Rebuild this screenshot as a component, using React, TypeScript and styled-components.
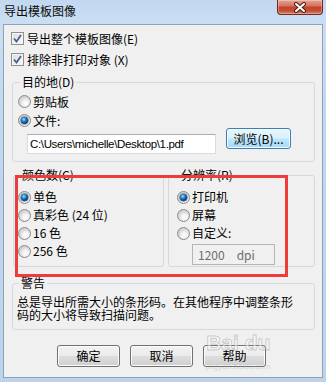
import React from "react";
import styled, { createGlobalStyle, css } from "styled-components";

const FONT = `"Noto Sans CJK SC", "Noto Sans", sans-serif`;

const Global = createGlobalStyle`
  html, body { margin: 0; padding: 0; background: #c6dbf2; }
  * { box-sizing: border-box; }
`;

const Window = styled.div`
  position: relative;
  width: 326px;
  height: 382px;
  display: flex;
  flex-direction: column;
  background: linear-gradient(#c2d8f1, #cadef3 22px, #c1d7ef 120px, #bdd3ec);
  font-family: ${FONT};
  font-size: 12px;
  color: #000;
  overflow: hidden;
`;

const TitleBar = styled.div`
  height: 24px;
  flex: none;
  display: flex;
  align-items: flex-start;
  justify-content: space-between;
  padding: 0 3px 0 4px;
`;

const Title = styled.div`
  line-height: 14px;
  padding-top: 4px;
  color: #0a0a0a;
`;

const CloseButton = styled.div`
  width: 46px;
  height: 15px;
  border: 1px solid #6d2b21;
  border-top: none;
  border-radius: 0 0 4px 4px;
  background: linear-gradient(#e6a395, #d67562 40%, #c4452e 52%, #c54b34 75%, #d8806a);
  box-shadow: inset 0 0 0 1px rgba(255, 255, 255, 0.3);
  display: flex;
  align-items: center;
  justify-content: center;
`;

const Client = styled.div`
  flex: 1;
  margin: 0 3px 4px 3px;
  background: #f0f0f0;
  border: 1px solid #8fa1b6;
  display: flex;
  flex-direction: column;
  padding: 3px 7px 10px 8px;
`;

const CheckRow = styled.label`
  height: 21px;
  display: flex;
  align-items: center;
  gap: 3px;
  margin-left: -1px;
  line-height: 14px;
`;

const CheckBox = styled.span`
  width: 13px;
  height: 13px;
  flex: none;
  border: 1px solid #8e8f8f;
  background: linear-gradient(135deg, #dcdcdc, #fbfbfb);
  box-shadow: inset 0 0 0 1px #f4f4f4;
  display: flex;
  align-items: center;
  justify-content: center;
`;

const Group = styled.fieldset<{ $pt: number; $pb: number; $pl: number; $pr?: number }>`
  margin: 0;
  min-width: 0;
  border: 1px solid #d3dadf;
  border-radius: 3px;
  padding: ${(p) => `${p.$pt}px ${p.$pr ?? 5}px ${p.$pb}px ${p.$pl}px`};
`;

const Legend = styled.legend`
  padding: 0 2px;
  margin-left: 2px;
  line-height: 14px;
  height: 14px;
`;

const RadioRow = styled.label<{ $h: number }>`
  height: ${(p) => p.$h}px;
  display: flex;
  align-items: center;
  gap: 2px;
  line-height: 14px;
  white-space: nowrap;
`;

const Radio = styled.span<{ $on?: boolean }>`
  position: relative;
  width: 13px;
  height: 13px;
  flex: none;
  border-radius: 50%;
  border: 1px solid #8b8b8b;
  background: radial-gradient(circle at 60% 65%, #ffffff 0, #f2f2f2 3px, #d3d3d3 6px);
  ${(p) =>
    p.$on &&
    css`
      &::after {
        content: "";
        position: absolute;
        left: 2px;
        top: 2px;
        width: 7px;
        height: 7px;
        border-radius: 50%;
        background: radial-gradient(circle at 40% 35%, #b8e6ff 0, #3b9ad8 1.5px, #0f5fa8 3px, #0a3f78 4px);
        box-shadow: 0 0 0 0.5px #1c4f80;
      }
    `}
`;

const FileRow = styled.div`
  display: flex;
  align-items: flex-start;
  margin-top: -2px;
`;

const PathInput = styled.div`
  width: 189px;
  height: 20px;
  margin: 6px 0 0 9px;
  background: #fff;
  border: 1px solid #d7dbe2;
  border-top-color: #abadb3;
  padding: 0 2px;
  font-family: "Liberation Sans", ${FONT};
  font-size: 11.5px;
  letter-spacing: -0.35px;
  line-height: 18px;
  white-space: nowrap;
  overflow: hidden;
`;

const Button = styled.div<{ $hot?: boolean }>`
  width: ${(p) => (p.$hot ? 65 : 63)}px;
  height: ${(p) => (p.$hot ? 21 : 22)}px;
  border: 1px solid #707070;
  border-radius: 3px;
  background: linear-gradient(#f2f2f2, #ebebeb 48%, #dddddd 52%, #cfcfcf);
  box-shadow: inset 0 0 0 1px #fcfcfc;
  display: flex;
  align-items: center;
  justify-content: center;
  line-height: 14px;
  ${(p) =>
    p.$hot &&
    css`
      margin-left: 10px;
      border-color: #3c7fb1;
      background: linear-gradient(#eaf6fd, #d9f0fc 48%, #bee6fd 52%, #a7d9f5);
      box-shadow: inset 0 0 0 1px #f4fbfe;
    `}
`;

const GroupRow = styled.div`
  display: flex;
  gap: 4px;
  margin: 6px 0 0 1px;
`;

const DpiInput = styled.div`
  width: 83px;
  height: 21px;
  margin: 2px 0 0 15px;
  border: 1px solid #b5b5b5;
  background: #f0f0f0;
  color: #6d6d6d;
  display: flex;
  align-items: center;
  gap: 12px;
  padding-left: 5px;
  line-height: 14px;
`;

const WarnText = styled.div`
  line-height: 13px;
`;

const ButtonRow = styled.div`
  display: flex;
  justify-content: center;
  gap: 10px;
  margin-top: 15px;
  padding-right: 4px;
`;

const Annotation = styled.div`
  position: absolute;
  left: 15px;
  top: 175px;
  width: 273px;
  height: 102px;
  border: 3px solid #f03b3b;
  pointer-events: none;
`;

const Watermark = styled.div`
  position: absolute;
  left: 206px;
  top: 332px;
  color: rgba(150, 150, 150, 0.35);
  font-family: "Liberation Sans", sans-serif;
  pointer-events: none;
  display: flex;
  flex-direction: column;
  align-items: center;
`;

const MarkBig = styled.span`
  font-size: 21px;
  font-weight: bold;
  line-height: 22px;
  color: rgba(255, 255, 255, 0.5);
  -webkit-text-stroke: 1px rgba(150, 150, 150, 0.45);
`;

const MarkSmall = styled.span`
  font-size: 8px;
  line-height: 9px;
  margin-top: 8px;
`;

const Check = () => (
  <svg width="9" height="9" viewBox="0 0 9 9">
    <path d="M1 4.5 L3.5 7.5 L8 1" fill="none" stroke="#4a5f8e" strokeWidth="1.8" />
  </svg>
);

const CloseX = () => (
  <svg width="14" height="11" viewBox="0 0 14 11">
    <path d="M3 2 L11 9 M11 2 L3 9" stroke="#4a1c14" strokeWidth="4" strokeLinecap="round" />
    <path d="M3 2 L11 9 M11 2 L3 9" stroke="#ffffff" strokeWidth="2" strokeLinecap="round" />
  </svg>
);

export default function App() {
  return (
    <>
      <Global />
      <Window>
        <TitleBar>
          <Title>导出模板图像</Title>
          <CloseButton>
            <CloseX />
          </CloseButton>
        </TitleBar>
        <Client>
          <CheckRow>
            <CheckBox>
              <Check />
            </CheckBox>
            导出整个模板图像(E)
          </CheckRow>
          <CheckRow>
            <CheckBox>
              <Check />
            </CheckBox>
            排除非打印对象 (X)
          </CheckRow>

          <Group $pt={3} $pb={7} $pl={5} style={{ marginTop: 5 }}>
            <Legend>目的地(D)</Legend>
            <RadioRow $h={19}>
              <Radio />
              剪贴板
            </RadioRow>
            <RadioRow $h={19}>
              <Radio $on />
              文件:
            </RadioRow>
            <FileRow>
              <PathInput>C:\Users\michelle\Desktop\1.pdf</PathInput>
              <Button $hot>浏览(B)...</Button>
            </FileRow>
          </Group>

          <GroupRow>
            <Group $pt={6} $pb={1} $pl={4} style={{ width: 151 }}>
              <Legend>颜色数(C)</Legend>
              <RadioRow $h={18}>
                <Radio $on />
                单色
              </RadioRow>
              <RadioRow $h={18}>
                <Radio />
                真彩色 (24 位)
              </RadioRow>
              <RadioRow $h={18}>
                <Radio />
                16 色
              </RadioRow>
              <RadioRow $h={18}>
                <Radio />
                256 色
              </RadioRow>
            </Group>
            <Group $pt={6} $pb={1} $pl={8} style={{ flex: 1 }}>
              <Legend>分辨率(R)</Legend>
              <RadioRow $h={18}>
                <Radio $on />
                打印机
              </RadioRow>
              <RadioRow $h={18}>
                <Radio />
                屏幕
              </RadioRow>
              <RadioRow $h={18}>
                <Radio />
                自定义:
              </RadioRow>
              <DpiInput>
                <span>1200</span>
                <span>dpi</span>
              </DpiInput>
            </Group>
          </GroupRow>

          <Group $pt={5} $pb={8} $pl={4} $pr={14} style={{ marginTop: 9 }}>
            <Legend>警告</Legend>
            <WarnText>总是导出所需大小的条形码。在其他程序中调整条形码的大小将导致扫描问题。</WarnText>
          </Group>

          <ButtonRow>
            <Button>确定</Button>
            <Button>取消</Button>
            <Button>帮助</Button>
          </ButtonRow>
        </Client>
        <Annotation />
        <Watermark>
          <MarkBig>Bai du</MarkBig>
          <MarkSmall>jingyan.baidu.com</MarkSmall>
        </Watermark>
      </Window>
    </>
  );
}
